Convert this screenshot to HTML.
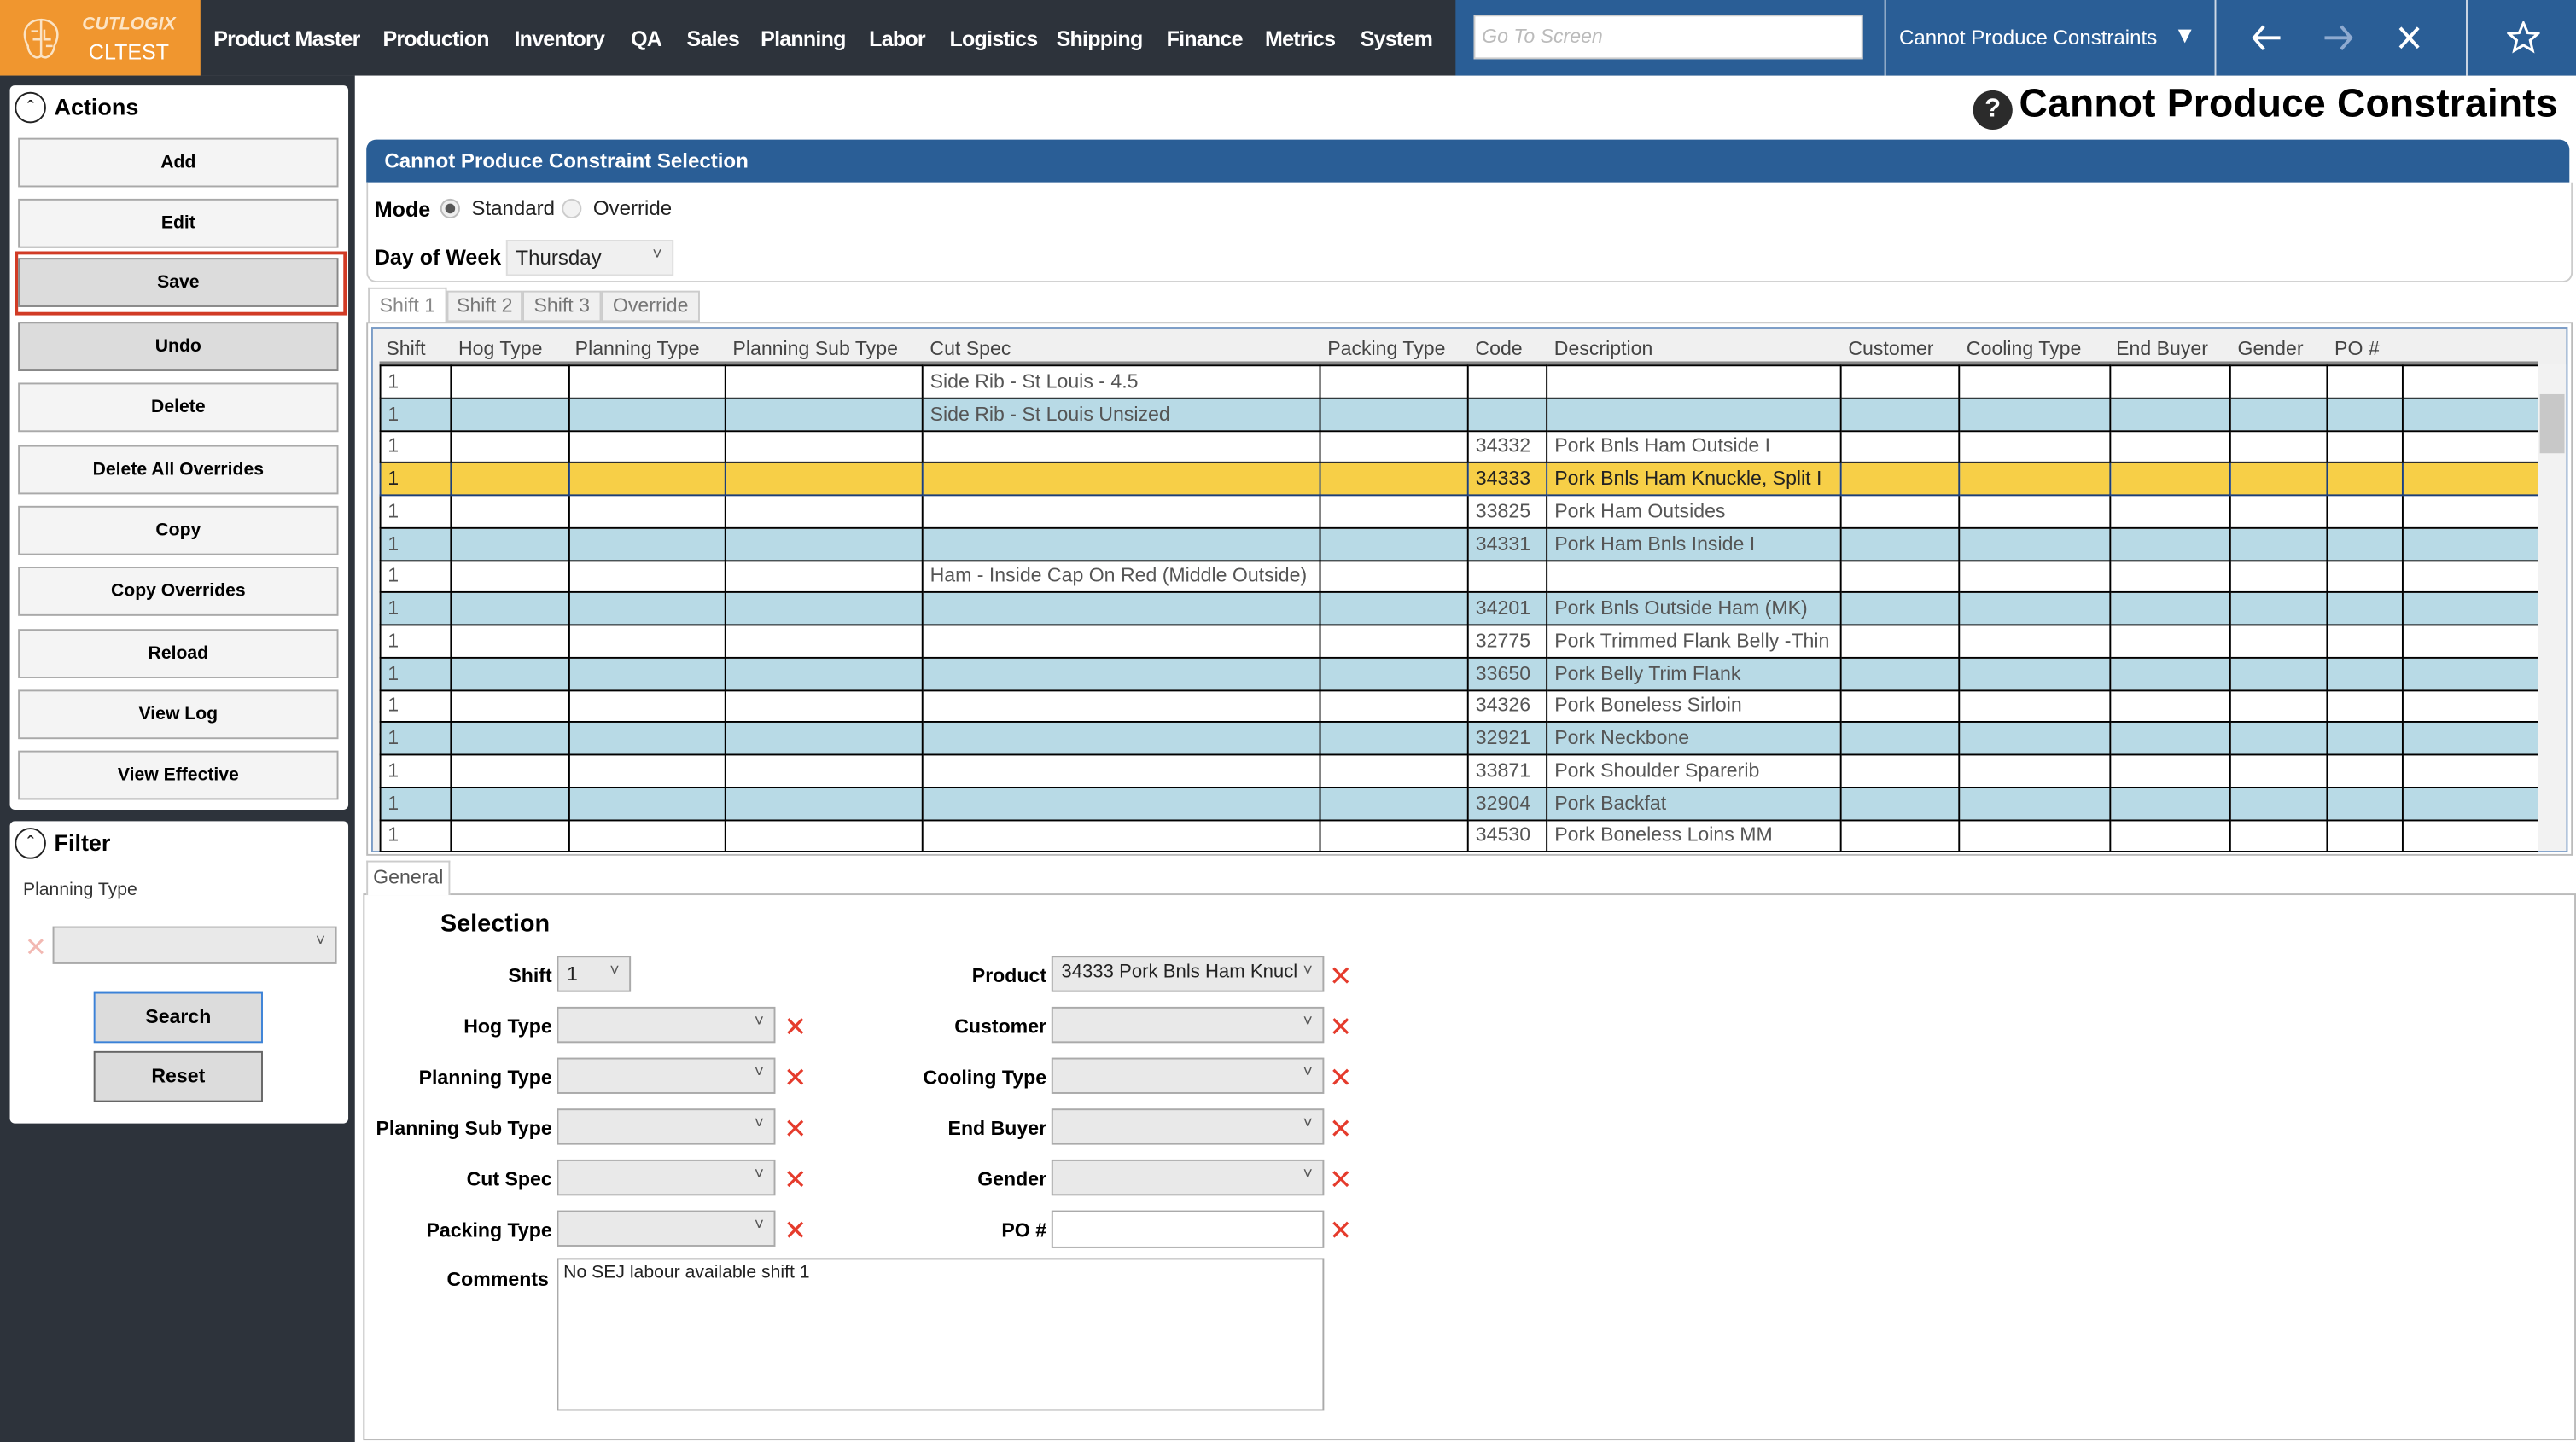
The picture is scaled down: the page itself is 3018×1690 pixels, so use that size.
<!DOCTYPE html>
<html><head><meta charset="utf-8"><style>
*{box-sizing:border-box;margin:0;padding:0}
html,body{width:3018px;height:1690px;overflow:hidden;background:#fff}
#w{position:absolute;left:0;top:0;width:1568px;height:878px;transform:scale(1.92474,1.92483);transform-origin:0 0;font-family:"Liberation Sans",sans-serif;font-size:12px;color:#222}
.a{position:absolute;white-space:nowrap}
.nav span{position:absolute;top:16px;color:#fff;font-size:13px;font-weight:bold;letter-spacing:-.4px}
.btn{position:absolute;left:11px;width:195px;height:30px;background:#f4f4f4;border:1px solid #a9a9a9;text-align:center;line-height:28px;font-size:11px;font-weight:bold;color:#000}
.grid{position:absolute;left:231px;top:222px;border-collapse:collapse;table-layout:fixed;width:1314px}
.grid td{height:19.75px;border:1px solid #000;padding:0 4px;font-size:12px;color:#555;white-space:nowrap;overflow:hidden;line-height:17px;background:#fff}
.grid tr:nth-child(even) td{background:#b8dae6}
.grid tr.y td{background:#f7cf47;border-color:#1c3f7a;color:#222}
.grid td:last-child{border-left:1px solid #000;border-right:none}
.hd span{position:absolute;top:205px;font-size:12px;color:#444}
.lbl{position:absolute;font-size:12px;font-weight:bold;color:#000;text-align:right;white-space:nowrap}
.sel{position:absolute;height:22px;background:#e9e9e9;border:1px solid #aaa}
.sel:after{content:"\02C5";position:absolute;right:6px;top:3px;font-size:10px;color:#555}
.x{position:absolute;color:#e53b2c;font-size:17px;line-height:17px}
.tab{position:absolute;white-space:nowrap;font-size:12px;text-align:center}
</style></head><body><div id="w">
<div class="a" style="left:0;top:0;width:1568px;height:46px;background:#2d333b"></div>
<div class="a" style="left:0;top:0;width:122px;height:46px;background:#f0962f"></div>
<svg class="a" style="left:12px;top:10px" width="26" height="27" viewBox="0 0 26 27" fill="none" stroke="#fbe3c4" stroke-width="1.3"><path d="M13 2C7 2 3 6 3 11c0 3 1 5 2 7 0 3 2 6 5 7 1 0 3 0 3-2V2zM13 2c6 0 10 4 10 9 0 3-1 5-2 7 0 3-2 6-5 7-1 0-3 0-3-2"/><path d="M7 9h4M8 14h5M15 8v6h4M16 18h4"/></svg>
<div class="a" style="left:50px;top:9px;color:#fde4c4;font-size:11px;font-weight:bold;font-style:italic">CUTLOGIX</div>
<div class="a" style="left:54px;top:24px;color:#fff;font-size:13px">CLTEST</div>
<div class="nav"><span style="left:130px">Product Master</span><span style="left:233px">Production</span><span style="left:313px">Inventory</span><span style="left:384px">QA</span><span style="left:418px">Sales</span><span style="left:463px">Planning</span><span style="left:529px">Labor</span><span style="left:578px">Logistics</span><span style="left:643px">Shipping</span><span style="left:710px">Finance</span><span style="left:770px">Metrics</span><span style="left:828px">System</span></div>
<div class="a" style="left:886px;top:0;width:682px;height:46px;background:#2a5e96"></div>
<div class="a" style="left:897px;top:9px;width:237px;height:27px;background:#fff;border:1px solid #ccc;color:#bbb;font-style:italic;font-size:12px;padding:5px 4px">Go To Screen</div>
<div class="a" style="left:1147px;top:0;width:1px;height:46px;background:#cfd9e6"></div>
<div class="a" style="left:1348px;top:0;width:1px;height:46px;background:#cfd9e6"></div>
<div class="a" style="left:1501px;top:0;width:1px;height:46px;background:#cfd9e6"></div>
<div class="a" style="left:1156px;top:16px;color:#fff;font-size:12.5px">Cannot Produce Constraints</div>
<div class="a" style="left:1323px;top:13px;color:#fff;font-size:14px">&#9660;</div>
<svg class="a" style="left:1368px;top:13px" width="112" height="20" fill="none" stroke-width="2"><path d="M20 10H4M10 3L4 10l6 7" stroke="#fff"/><path d="M47 10h16M57 3l6 7-6 7" stroke="#8eaad0"/><path d="M93 4l11 12M104 4L93 16" stroke="#fff"/></svg>
<svg class="a" style="left:1526px;top:13px" width="20" height="20" fill="none" stroke="#fff" stroke-width="1.6"><path d="M10 1l2.6 6 6.2.5-4.7 4 1.5 6.3L10 14.5 4.4 17.8 5.9 11.5 1.2 7.5l6.2-.5z"/></svg>
<div class="a" style="left:0;top:46px;width:216px;height:832px;background:#2d333b"></div>
<div class="a" style="left:6px;top:52px;width:206px;height:441px;background:#fff;border-radius:3px"></div>
<div class="a" style="left:9px;top:56px;width:19px;height:19px;border:1.3px solid #222;border-radius:50%;text-align:center;font-size:11px;line-height:19px;font-weight:bold">&#710;</div>
<div class="a" style="left:33px;top:57px;font-size:14px;font-weight:bold;color:#000">Actions</div>
<div class="btn" style="top:84px">Add</div>
<div class="btn" style="top:121px">Edit</div>
<div class="a" style="left:9px;top:153px;width:202px;height:39px;border:2px solid #d13b25"></div>
<div class="btn" style="top:157px;background:#dcdcdc;border-color:#888">Save</div>
<div class="btn" style="top:196px;background:#dcdcdc;border-color:#888">Undo</div>
<div class="btn" style="top:233px">Delete</div>
<div class="btn" style="top:271px">Delete All Overrides</div>
<div class="btn" style="top:308px">Copy</div>
<div class="btn" style="top:345px">Copy Overrides</div>
<div class="btn" style="top:383px">Reload</div>
<div class="btn" style="top:420px">View Log</div>
<div class="btn" style="top:457px">View Effective</div>
<div class="a" style="left:6px;top:500px;width:206px;height:184px;background:#fff;border-radius:3px"></div>
<div class="a" style="left:9px;top:504px;width:19px;height:19px;border:1.3px solid #222;border-radius:50%;text-align:center;font-size:11px;line-height:19px;font-weight:bold">&#710;</div>
<div class="a" style="left:33px;top:505px;font-size:14px;font-weight:bold;color:#000">Filter</div>
<div class="a" style="left:14px;top:536px;font-size:11px;color:#333">Planning Type</div>
<div class="a" style="left:15px;top:567px;color:#f2b8b2;font-size:16px">&#10005;</div>
<div class="sel" style="left:32px;top:564px;width:173px;height:23px"></div>
<div class="a" style="left:57px;top:604px;width:103px;height:31px;background:#dcdcdc;border:1px solid #3b82d8;text-align:center;line-height:29px;font-weight:bold;font-size:12px;color:#000">Search</div>
<div class="a" style="left:57px;top:640px;width:103px;height:31px;background:#dcdcdc;border:1px solid #666;text-align:center;line-height:29px;font-weight:bold;font-size:12px;color:#000">Reset</div>
<div class="a" style="left:1201px;top:55px;width:24px;height:24px;border-radius:50%;background:#2b2b2b;color:#fff;font-weight:bold;text-align:center;line-height:24px;font-size:16px">?</div>
<div class="a" style="left:1229px;top:50px;font-size:24px;font-weight:bold;color:#000;letter-spacing:.1px">Cannot Produce Constraints</div>
<div class="a" style="left:223px;top:85px;width:1341px;height:26px;background:#2a5e96;border-radius:6px 6px 0 0"></div>
<div class="a" style="left:234px;top:91px;color:#fff;font-weight:bold;font-size:12.5px">Cannot Produce Constraint Selection</div>
<div class="a" style="left:223px;top:111px;width:1343px;height:61px;border:1px solid #ccc;border-top:none;border-radius:0 0 6px 6px"></div>
<div class="a" style="left:228px;top:120px;font-weight:bold;font-size:13px;color:#000">Mode</div>
<div class="a" style="left:268px;top:121px;width:12px;height:12px;border-radius:50%;border:1px solid #bbb;background:#eee"><div style="width:6px;height:6px;border-radius:50%;background:#555;margin:2px"></div></div>
<div class="a" style="left:287px;top:120px;font-size:12.5px">Standard</div>
<div class="a" style="left:342px;top:121px;width:12px;height:12px;border-radius:50%;border:1px solid #ccc;background:#f2f2f2"></div>
<div class="a" style="left:361px;top:120px;font-size:12.5px">Override</div>
<div class="a" style="left:228px;top:149px;font-weight:bold;font-size:13px;color:#000">Day of Week</div>
<div class="sel" style="left:308px;top:146px;width:102px;height:22px;background:#f0f0f0;border-color:#ddd"><span style="position:absolute;left:5px;top:3px;font-size:12.5px">Thursday</span></div>
<div class="tab" style="left:224px;top:175px;width:48px;height:22px;border:1px solid #ccc;border-bottom:none;background:#fff;color:#888;line-height:20px">Shift 1</div>
<div class="tab" style="left:272px;top:177px;width:46px;height:19px;border:1px solid #ccc;background:#f0f0f0;color:#777;line-height:17px">Shift 2</div>
<div class="tab" style="left:318px;top:177px;width:48px;height:19px;border:1px solid #ccc;background:#f0f0f0;color:#777;line-height:17px">Shift 3</div>
<div class="tab" style="left:366px;top:177px;width:60px;height:19px;border:1px solid #ccc;background:#f0f0f0;color:#777;line-height:17px">Override</div>
<div class="a" style="left:223px;top:196px;width:1343px;height:325px;border:1px solid #bbb;background:#fff"></div>
<div class="a" style="left:226px;top:199px;width:1337px;height:320px;border:1px solid #7a9cc6;background:#f0f0f0"></div>
<div class="hd"><span style="left:235px">Shift</span><span style="left:279px">Hog Type</span><span style="left:350px">Planning Type</span><span style="left:446px">Planning Sub Type</span><span style="left:566px">Cut Spec</span><span style="left:808px">Packing Type</span><span style="left:898px">Code</span><span style="left:946px">Description</span><span style="left:1125px">Customer</span><span style="left:1197px">Cooling Type</span><span style="left:1288px">End Buyer</span><span style="left:1362px">Gender</span><span style="left:1421px">PO #</span></div>
<div class="a" style="left:231px;top:220px;width:1314px;height:2px;background:#888"></div>
<table class="grid"><colgroup><col style="width:43px"><col style="width:72px"><col style="width:95px"><col style="width:120px"><col style="width:242px"><col style="width:90px"><col style="width:48px"><col style="width:179px"><col style="width:72px"><col style="width:92px"><col style="width:73px"><col style="width:59px"><col style="width:46px"><col style="width:82px"></colgroup>
<tr><td>1</td><td></td><td></td><td></td><td>Side Rib - St Louis - 4.5</td><td></td><td></td><td></td><td></td><td></td><td></td><td></td><td></td><td></td></tr>
<tr><td>1</td><td></td><td></td><td></td><td>Side Rib - St Louis Unsized</td><td></td><td></td><td></td><td></td><td></td><td></td><td></td><td></td><td></td></tr>
<tr><td>1</td><td></td><td></td><td></td><td></td><td></td><td>34332</td><td>Pork Bnls Ham Outside I</td><td></td><td></td><td></td><td></td><td></td><td></td></tr>
<tr class="y"><td>1</td><td></td><td></td><td></td><td></td><td></td><td>34333</td><td>Pork Bnls Ham Knuckle, Split I</td><td></td><td></td><td></td><td></td><td></td><td></td></tr>
<tr><td>1</td><td></td><td></td><td></td><td></td><td></td><td>33825</td><td>Pork Ham Outsides</td><td></td><td></td><td></td><td></td><td></td><td></td></tr>
<tr><td>1</td><td></td><td></td><td></td><td></td><td></td><td>34331</td><td>Pork Ham Bnls Inside I</td><td></td><td></td><td></td><td></td><td></td><td></td></tr>
<tr><td>1</td><td></td><td></td><td></td><td>Ham - Inside Cap On Red (Middle Outside)</td><td></td><td></td><td></td><td></td><td></td><td></td><td></td><td></td><td></td></tr>
<tr><td>1</td><td></td><td></td><td></td><td></td><td></td><td>34201</td><td>Pork Bnls Outside Ham (MK)</td><td></td><td></td><td></td><td></td><td></td><td></td></tr>
<tr><td>1</td><td></td><td></td><td></td><td></td><td></td><td>32775</td><td>Pork Trimmed Flank Belly -Thin</td><td></td><td></td><td></td><td></td><td></td><td></td></tr>
<tr><td>1</td><td></td><td></td><td></td><td></td><td></td><td>33650</td><td>Pork Belly Trim Flank</td><td></td><td></td><td></td><td></td><td></td><td></td></tr>
<tr><td>1</td><td></td><td></td><td></td><td></td><td></td><td>34326</td><td>Pork Boneless Sirloin</td><td></td><td></td><td></td><td></td><td></td><td></td></tr>
<tr><td>1</td><td></td><td></td><td></td><td></td><td></td><td>32921</td><td>Pork Neckbone</td><td></td><td></td><td></td><td></td><td></td><td></td></tr>
<tr><td>1</td><td></td><td></td><td></td><td></td><td></td><td>33871</td><td>Pork Shoulder Sparerib</td><td></td><td></td><td></td><td></td><td></td><td></td></tr>
<tr><td>1</td><td></td><td></td><td></td><td></td><td></td><td>32904</td><td>Pork Backfat</td><td></td><td></td><td></td><td></td><td></td><td></td></tr>
<tr><td>1</td><td></td><td></td><td></td><td></td><td></td><td>34530</td><td>Pork Boneless Loins MM</td><td></td><td></td><td></td><td></td><td></td><td></td></tr>
</table>
<div class="a" style="left:1545px;top:222px;width:17px;height:296px;background:#f2f2f2"></div>
<div class="a" style="left:1546px;top:240px;width:15px;height:36px;background:#c8c8c8"></div>
<div class="a" style="left:221px;top:544px;width:1347px;height:333px;border:1px solid #bbb;background:#fff"></div>
<div class="tab" style="left:223px;top:524px;width:51px;height:21px;border:1px solid #ccc;border-bottom:none;background:#fff;color:#555;line-height:19px">General</div>
<div class="a" style="left:268px;top:554px;font-size:15px;font-weight:bold;color:#000">Selection</div>
<div class="lbl" style="right:1232px;top:587px">Shift</div>
<div class="sel" style="left:339px;top:582px;width:45px"><span style="position:absolute;left:5px;top:3px">1</span></div>
<div class="lbl" style="right:1232px;top:618px">Hog Type</div>
<div class="lbl" style="right:1232px;top:649px">Planning Type</div>
<div class="lbl" style="right:1232px;top:680px">Planning Sub Type</div>
<div class="lbl" style="right:1232px;top:711px">Cut Spec</div>
<div class="lbl" style="right:1232px;top:742px">Packing Type</div>
<div class="sel" style="left:339px;top:613px;width:133px"></div>
<div class="sel" style="left:339px;top:644px;width:133px"></div>
<div class="sel" style="left:339px;top:675px;width:133px"></div>
<div class="sel" style="left:339px;top:706px;width:133px"></div>
<div class="sel" style="left:339px;top:737px;width:133px"></div>
<div class="x" style="left:477px;top:617px">&#10005;</div>
<div class="x" style="left:477px;top:648px">&#10005;</div>
<div class="x" style="left:477px;top:679px">&#10005;</div>
<div class="x" style="left:477px;top:710px">&#10005;</div>
<div class="x" style="left:477px;top:741px">&#10005;</div>
<div class="lbl" style="right:931px;top:587px">Product</div>
<div class="lbl" style="right:931px;top:618px">Customer</div>
<div class="lbl" style="right:931px;top:649px">Cooling Type</div>
<div class="lbl" style="right:931px;top:680px">End Buyer</div>
<div class="lbl" style="right:931px;top:711px">Gender</div>
<div class="lbl" style="right:931px;top:742px">PO #</div>
<div class="sel" style="left:640px;top:582px;width:166px"><span style="position:absolute;left:5px;top:3px;font-size:11.5px">34333 Pork Bnls Ham Knucl</span></div>
<div class="sel" style="left:640px;top:613px;width:166px"></div>
<div class="sel" style="left:640px;top:644px;width:166px"></div>
<div class="sel" style="left:640px;top:675px;width:166px"></div>
<div class="sel" style="left:640px;top:706px;width:166px"></div>
<div class="a" style="left:640px;top:737px;width:166px;height:23px;border:1px solid #aaa;background:#fff"></div>
<div class="x" style="left:809px;top:586px">&#10005;</div>
<div class="x" style="left:809px;top:617px">&#10005;</div>
<div class="x" style="left:809px;top:648px">&#10005;</div>
<div class="x" style="left:809px;top:679px">&#10005;</div>
<div class="x" style="left:809px;top:710px">&#10005;</div>
<div class="x" style="left:809px;top:741px">&#10005;</div>
<div class="lbl" style="right:1234px;top:772px">Comments</div>
<div class="a" style="left:339px;top:766px;width:467px;height:93px;border:1px solid #aaa;background:#fff;padding:2px 3px;font-size:11px">No SEJ labour available shift 1</div>
</div></body></html>
